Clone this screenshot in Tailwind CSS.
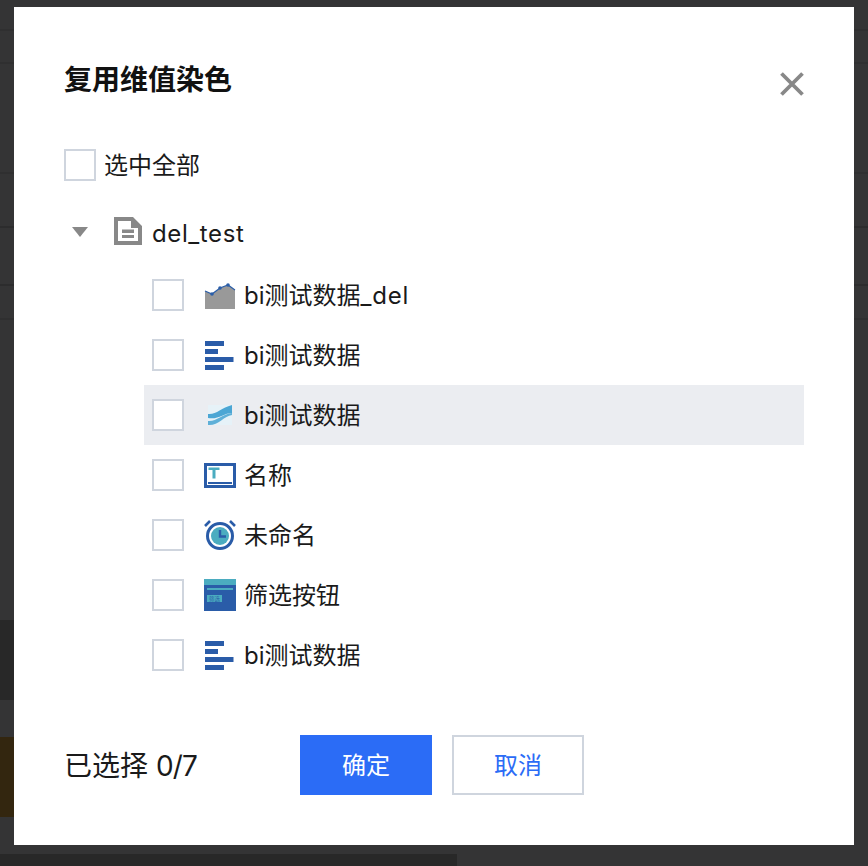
<!DOCTYPE html>
<html lang="en">
<head>
    <meta charset="UTF-8">
    <title>复用维值染色</title>
    <script src="https://cdn.jsdelivr.net/npm/@tailwindcss/browser@4"></script>
</head>
<body class="bg-[#343435] font-['Inter','Noto_Sans_CJK_SC',sans-serif] text-[#1a1a1a]">
<div class="relative h-[866px] w-[868px] overflow-hidden">
    <!-- dimmed page behind the dialog -->
    <div class="absolute left-0 top-[29px] h-[2px] w-full bg-[#2f2f30]"></div>
    <div class="absolute left-0 top-[62px] h-[2px] w-full bg-[#2f2f30]"></div>
    <div class="absolute left-0 top-[172px] h-[2px] w-full bg-[#2f2f30]"></div>
    <div class="absolute left-0 top-[226px] h-[2px] w-full bg-[#2c2c2d]"></div>
    <div class="absolute left-0 top-[284px] h-[2px] w-full bg-[#2c2c2d]"></div>
    <div class="absolute left-0 top-[318px] h-[2px] w-full bg-[#2f2f30]"></div>
    <div class="absolute left-0 top-[620px] h-[80px] w-[14px] bg-[#282828]"></div>
    <div class="absolute left-0 top-[737px] h-[80px] w-[14px] bg-[#33260f]"></div>
    <div class="absolute left-0 top-[854px] h-[12px] w-[457px] bg-[#282828]"></div>

    <!-- dialog -->
    <div class="absolute left-[14px] top-[7px] h-[838px] w-[840px] bg-white pl-[50px]">
        <button class="absolute left-[765px] top-[64px]">
            <svg width="26" height="26" viewBox="0 0 26 26"><path d="M2.500 2.500L23.500 23.500M23.500 2.500L2.500 23.500" stroke="#888888" stroke-width="3.800"/></svg>
        </button>
        <h2 class="mt-[57px] flex h-[32px] items-center text-[28px] leading-[32px] font-bold text-[#111111]">复用维值染色</h2>

        <label class="mt-[53px] flex h-[32px] items-center gap-[8px] text-[24px]">
            <span class="h-[32px] w-[32px] border-2 border-[#cfd5de] bg-white"></span>
            <span class="mt-[2px]">选中全部</span>
        </label>

        <!-- tree -->
        <div class="mt-[36px] flex h-[28px] items-center">
            <svg class="ml-[8px] mt-[2px]" width="16" height="10" viewBox="0 0 16 10"><path d="M0 0H16L8 10Z" fill="#888888"/></svg>
            <svg class="ml-[26px]" width="28" height="28" viewBox="0 0 28 28">
                <path d="M0 0H19L28 9V28H0ZM4 4V24H24V11H17V4Z" fill="#888888" fill-rule="evenodd"/>
                <path d="M8 12.500H20V16H8ZM8 18H20V21H8Z" fill="#888888"/>
            </svg>
            <span class="ml-[10px] mt-[5px] text-[24px] tracking-[0.6px]">del_test</span>
        </div>

        <ul class="ml-[80px] mt-[20px] w-[660px]">
            <li class="flex h-[60px] items-center pl-[8px] text-[24px]">
                <span class="h-[32px] w-[32px] border-2 border-[#cfd5de] bg-white"></span>
                <svg class="ml-[20px] mr-[8px]" width="32" height="32" viewBox="0 0 32 32">
                    <path d="M1 12L8 15L16 9L24 6L31 11V30H1Z" fill="#999999"/>
                    <path d="M1 12L8 15L16 9L24 6L31 11" fill="none" stroke="#2b5ea8" stroke-width="1.200"/>
                    <circle cx="8" cy="15" r="1.800" fill="#2b5ea8"/><circle cx="16" cy="9" r="1.800" fill="#2b5ea8"/><circle cx="24" cy="6" r="1.800" fill="#2b5ea8"/>
                </svg>
                <span class="mt-[2px]">bi测试数据<span class="tracking-[0.8px]">_del</span></span>
            </li>
            <li class="flex h-[60px] items-center pl-[8px] text-[24px]">
                <span class="h-[32px] w-[32px] border-2 border-[#cfd5de] bg-white"></span>
                <svg class="ml-[20px] mr-[8px]" width="32" height="32" viewBox="0 0 32 32" fill="#2a5ca8">
                    <rect x="1" y="2" width="19" height="5"/><rect x="1" y="10" width="13" height="5"/><rect x="1" y="18" width="28.500" height="5"/><rect x="1" y="26" width="19" height="5"/>
                </svg>
                <span class="mt-[2px]">bi测试数据</span>
            </li>
            <li class="flex h-[60px] items-center bg-[#ebedf1] pl-[8px] text-[24px]">
                <span class="h-[32px] w-[32px] border-2 border-[#cfd5de] bg-white"></span>
                <svg class="ml-[20px] mr-[8px]" width="32" height="32" viewBox="0 0 32 32">
                    <path d="M4 6H28V26H4Z" fill="#e6f2f8"/>
                    <path d="M4 15C12 16 17 9 28 6V14C20 14 14 21 4 19Z" fill="#4ba6d4"/>
                    <path d="M4 22C12 23 18 15 28 14V16C20 17 14 27 4 26Z" fill="#5fb0d8"/>
                </svg>
                <span class="mt-[2px]">bi测试数据</span>
            </li>
            <li class="flex h-[60px] items-center pl-[8px] text-[24px]">
                <span class="h-[32px] w-[32px] border-2 border-[#cfd5de] bg-white"></span>
                <svg class="ml-[20px] mr-[8px]" width="32" height="32" viewBox="0 0 32 32">
                    <rect x="1.500" y="5.500" width="29" height="22" fill="none" stroke="#2a5ca8" stroke-width="3"/>
                    <path d="M4.500 8.500H15.500V11H11.500V19.500H8.500V11H4.500Z" fill="#4bacc0"/>
                    <rect x="4" y="23" width="24" height="2" fill="#2a5ca8"/>
                </svg>
                <span class="mt-[2px]">名称</span>
            </li>
            <li class="flex h-[60px] items-center pl-[8px] text-[24px]">
                <span class="h-[32px] w-[32px] border-2 border-[#cfd5de] bg-white"></span>
                <svg class="ml-[20px] mr-[8px]" width="32" height="32" viewBox="0 0 32 32">
                    <circle cx="16" cy="17" r="12.500" fill="none" stroke="#2a5ca8" stroke-width="3"/>
                    <circle cx="16" cy="17" r="9" fill="#4bacc0"/>
                    <path d="M16 11V17.500H22" fill="none" stroke="#2a5ca8" stroke-width="2.400"/>
                    <path d="M1 7L6 2M31 7L26 2" stroke="#2a5ca8" stroke-width="2.600"/>
                </svg>
                <span class="mt-[2px]">未命名</span>
            </li>
            <li class="flex h-[60px] items-center pl-[8px] text-[24px]">
                <span class="h-[32px] w-[32px] border-2 border-[#cfd5de] bg-white"></span>
                <svg class="ml-[20px] mr-[8px]" width="32" height="32" viewBox="0 0 32 32">
                    <rect width="32" height="32" fill="#2a5ca8"/>
                    <rect width="32" height="6" fill="#4bacc0"/>
                    <rect x="3" y="9" width="26" height="2" fill="#4bacc0"/>
                    <rect x="3" y="16" width="15" height="7" fill="#4bacc0"/>
                    <text x="5" y="22" font-size="5.500" fill="#2a5ca8">筛选</text>
                </svg>
                <span class="mt-[2px]">筛选按钮</span>
            </li>
            <li class="flex h-[60px] items-center pl-[8px] text-[24px]">
                <span class="h-[32px] w-[32px] border-2 border-[#cfd5de] bg-white"></span>
                <svg class="ml-[20px] mr-[8px]" width="32" height="32" viewBox="0 0 32 32" fill="#2a5ca8">
                    <rect x="1" y="2" width="19" height="5"/><rect x="1" y="10" width="13" height="5"/><rect x="1" y="18" width="28.500" height="5"/><rect x="1" y="26" width="19" height="5"/>
                </svg>
                <span class="mt-[2px]">bi测试数据</span>
            </li>
        </ul>

        <div class="mt-[50px] flex h-[60px] items-center">
            <span class="mt-[2px] w-[236px] text-[28px]">已选择 <span class="tracking-[-0.8px]">0/7</span></span>
            <button class="h-[60px] w-[132px] bg-[#2b6cf6] pt-[2px] text-[24px] text-white">确定</button>
            <button class="ml-[20px] h-[60px] w-[132px] border-2 border-[#cfd5de] bg-white pt-[2px] text-[24px] text-[#2b6cf6]">取消</button>
        </div>
    </div>
</div>
</body>
</html>
